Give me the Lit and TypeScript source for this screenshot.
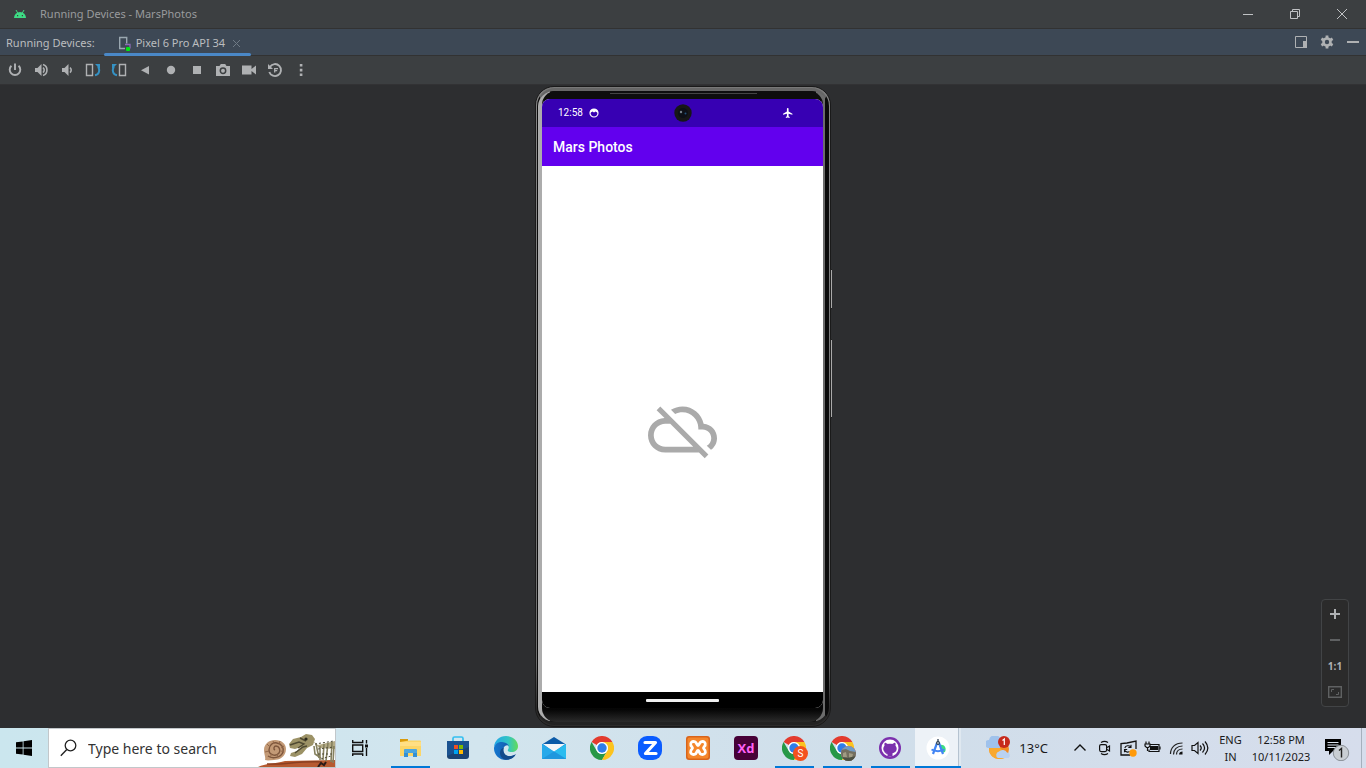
import { LitElement, html, css, svg, TemplateResult } from "lit";
import { customElement } from "lit/decorators.js";
import { classMap } from "lit/directives/class-map.js";

const icon = (w: number, h: number, body: unknown, box = `0 0 ${w} ${h}`) =>
  html`<svg width=${w} height=${h} viewBox=${box} aria-hidden="true">${body}</svg>`;

const chromeParts = svg`
  <path d="M1.6 6A12 12 0 0 1 22.4 6H12a6 6 0 0 0-5.2 3z" fill="#e33b2e"/>
  <path d="M1.6 6A12 12 0 0 0 12 24l5.2-9A6 6 0 0 1 6.8 15z" fill="#279847"/>
  <path d="M22.4 6A12 12 0 0 1 12 24l5.2-9a6 6 0 0 0 0-6L12 6z" fill="#fcc31e"/>
  <circle cx="12" cy="12" r="6" fill="#fff"/><circle cx="12" cy="12" r="4.7" fill="#2f7de9"/>`;

const deviceTools: { name: string; art: TemplateResult }[] = [
  { name: "Power", art: icon(16, 16, svg`<path d="M4.4 3.8a5.3 5.3 0 1 0 7.2 0M8 1.5V8" fill="none" stroke="#afb1b3" stroke-width="1.9"/>`) },
  { name: "Volume up", art: icon(16, 16, svg`<path d="M2 6h2.500l4-4v12l-4-4H2z" fill="#afb1b3"/><path d="M10 5.500a3.200 3.200 0 0 1 0 5M10 2.500a5.800 5.800 0 0 1 0 11" fill="none" stroke="#afb1b3" stroke-width="1.600"/>`) },
  { name: "Volume down", art: icon(16, 16, svg`<path d="M3 6h2.500l4-4v12l-4-4H3z" fill="#afb1b3"/><path d="M11 5.500a3.200 3.200 0 0 1 0 5" fill="none" stroke="#afb1b3" stroke-width="1.600"/>`) },
  { name: "Rotate left", art: icon(16, 16, svg`<path d="M1.500 2.500h6v11h-6z" fill="none" stroke="#afb1b3" stroke-width="1.400"/><path d="M10 13.300c4-.6 5.200-4.500 3.200-9" fill="none" stroke="#3592c4" stroke-width="2"/><path d="M10 2h5v5z" fill="#3592c4"/>`) },
  { name: "Rotate right", art: icon(16, 16, svg`<path d="M8.500 2.500h6v11h-6z" fill="none" stroke="#afb1b3" stroke-width="1.400"/><path d="M6 13.300c-4-.6-5.200-4.500-3.200-9" fill="none" stroke="#3592c4" stroke-width="2"/><path d="M6 2H1v5z" fill="#3592c4"/>`) },
  { name: "Back", art: icon(16, 16, svg`<path d="M12 4v8.500L4 8.250z" fill="#afb1b3"/>`) },
  { name: "Home", art: icon(16, 16, svg`<circle cx="8" cy="8" r="4.200" fill="#afb1b3"/>`) },
  { name: "Overview", art: icon(16, 16, svg`<path d="M4 4h8v8H4z" fill="#afb1b3"/>`) },
  { name: "Take screenshot", art: icon(16, 16, svg`<path d="M1 4h3.500l1.300-2h4.400l1.300 2H15v10H1z" fill="#afb1b3"/><circle cx="8" cy="8.800" r="2.700" fill="none" stroke="#3c3f41" stroke-width="1.500"/>`) },
  { name: "Record screen", art: icon(16, 16, svg`<path d="M1 3.500h9.500V7L15 3.500v9L10.500 9v3.500H1z" fill="#afb1b3"/>`) },
  { name: "Snapshots", art: icon(16, 16, svg`<path d="M3 4.700A6 6 0 1 1 2.300 10" fill="none" stroke="#afb1b3" stroke-width="1.900"/><path d="M1 2v5h5z" fill="#afb1b3"/><path d="M7.700 10.500V6.700H11M7.700 8.700h2.500" fill="none" stroke="#afb1b3" stroke-width="1.300"/>`) },
  { name: "More", art: icon(16, 16, svg`<path d="M6.800 2h2.600v2.600H6.800zM6.800 6.800h2.600v2.600H6.800zM6.800 11.500h2.600v2.600H6.800z" fill="#afb1b3"/>`) },
];

const apps: { name: string; running?: boolean; active?: boolean; art: TemplateResult }[] = [
  { name: "File Explorer", running: true, art: icon(24, 24, svg`<path d="M2 3h8v3H2z" fill="#d99a0b"/><path d="M2 6l9-1.500h11a1 1 0 0 1 1 1V20H2z" fill="#fcd667"/><path d="M2 6h21v4H2z" fill="#ffdf84"/><path d="M6 21v-6.500a1.500 1.500 0 0 1 1.500-1.500h10a1.500 1.500 0 0 1 1.500 1.500V21h-4v-4h-5v4z" fill="#3390d4"/><path d="M6 14.500A1.500 1.500 0 0 1 7.500 13h10a1.500 1.500 0 0 1 1.500 1.500V17H6z" fill="#4ba6df"/>`) },
  { name: "Microsoft Store", art: icon(24, 24, svg`<path d="M7 6V2.500A1.500 1.500 0 0 1 8.500 1h7A1.500 1.500 0 0 1 17 2.500V6" fill="none" stroke="#35bff0" stroke-width="1.700"/><path d="M1 5h22v15a3 3 0 0 1-3 3H4a3 3 0 0 1-3-3z" fill="#1b4372"/><path d="M1 5h22v6L1 20z" fill="#1a5290"/><path d="M8 9h4v4H8z" fill="#f25022"/><path d="M13 9h4v4h-4z" fill="#7fba00"/><path d="M8 14h4v4H8z" fill="#00a4ef"/><path d="M13 14h4v4h-4z" fill="#ffb900"/>`) },
  { name: "Microsoft Edge", art: icon(24, 24, svg`
      <defs><linearGradient id="e1" x1="0" x2="1"><stop offset="0" stop-color="#22a6e8"/><stop offset=".6" stop-color="#32c5c3"/><stop offset="1" stop-color="#63db58"/></linearGradient>
      <linearGradient id="e2" x1="0" x2="1"><stop offset="0" stop-color="#1477cf"/><stop offset="1" stop-color="#154f9f"/></linearGradient></defs>
      <path d="M0 11C.5 4.500 5.500 0 12 0c7 0 12 4.800 12 10 0 4-3 6-6.300 6-2.500 0-4-.8-4-1.800 0-.8 1-1 1-2.700C14.700 9 12 7 8.500 7 4 7 1 9 0 11z" fill="url(#e1)"/>
      <path d="M0 12c.5-3.500 4-6.300 8-6 3.500.2 6 1.700 7 4-1-1-2.500-1-3.500-.3C8 11.500 8 19 14 20c3 .5 5.500-.3 7.800-1.700C20 21.800 16.500 24 12 24 5 24-.2 18.500 0 12z" fill="url(#e2)"/>
      <path d="M9.800 11.500C8.500 16 11 20 15 20.200c2.600 0 5-.8 6.800-2-3 5-8.300 6.300-12.300 4.800C5 20.500 4.500 13.500 9.800 11.500z" fill="#114a8b"/>`) },
  { name: "Mail", art: icon(24, 24, svg`<path d="M0 8.500L12 1l12 7.500z" fill="#0c5ba8"/><path d="M0 8h24v15H0z" fill="#1590dc"/><path d="M1 8h22L12 16z" fill="#f5f7f9"/><path d="M0 8l24 15H0z" fill="#26a9ea"/><path d="M24 8v15L12 15.500z" fill="#2bbcef"/><path d="M0 23l12-7.500L24 23z" fill="#1f97de"/>`) },
  { name: "Chrome", art: icon(24, 24, chromeParts) },
  { name: "Zoom", art: icon(24, 24, svg`<rect width="24" height="24" rx="9" fill="#0b5cff"/><path d="M7 6.500h10.500L7.500 17.500H18" fill="none" stroke="#fff" stroke-width="3.200" stroke-linejoin="round" stroke-linecap="round"/>`) },
  { name: "XAMPP", art: icon(24, 24, svg`<rect width="24" height="24" rx="3" fill="#d9641a"/><rect x="1.500" y="1.500" width="21" height="21" rx="2" fill="#f5872c"/><path d="M9 5.800C6 4.800 4 7 4.800 9.200c.4 1.200 1.700 1.800 1.700 2.800s-1.300 1.600-1.700 2.800C4 17 6 19.200 9 18.200c1.700-.6 1.700-3.700 3-3.700s1.300 3.100 3 3.700c3 1 5-1.200 4.200-3.400-.4-1.200-1.700-1.800-1.700-2.800s1.300-1.600 1.700-2.800C20 7 18 4.800 15 5.800c-1.700.6-1.700 3.700-3 3.700S10.700 6.400 9 5.800z" fill="none" stroke="#fff" stroke-width="2.800"/>`) },
  { name: "Adobe XD", art: html`<span class="xd">Xd</span>` },
  { name: "Chrome profile S", running: true, art: html`<span class="profile">${icon(24, 24, chromeParts)}<span class="badge">S</span></span>` },
  { name: "Chrome profile photo", running: true, art: html`<span class="profile">${icon(24, 24, chromeParts)}<span class="badge">${icon(15, 15, svg`<path d="M0 0h15v15H0z" fill="#6f9bc6"/><path d="M0 4l5-1 4 2 6 1v9H0z" fill="#746f5f"/><path d="M2 7l3-1 1 5H2zM8 7l4 1-1 4-3 1z" fill="#a19b83"/><path d="M0 11l6 1 9-2v5H0z" fill="#4c5042"/>`)}</span></span>` },
  { name: "GitHub Desktop", running: true, art: icon(24, 24, svg`<circle cx="12" cy="12" r="11" fill="#7b30ad"/><circle cx="12" cy="12" r="8.500" fill="#fff"/><path d="M9.500 20.500v-3.300c-4.500-.7-5.200-5.200-3-7.500-.3-1-.2-2 .2-3 1.200 0 2.100.6 3 1.300 1.500-.4 3-.4 4.600 0 .9-.7 1.800-1.300 3-1.300.4 1 .5 2 .2 3 2.200 2.300 1.500 6.800-3 7.500v3.300z" fill="#7b30ad"/><path d="M10 17.600c-1.500.4-2.300-.2-3-1.500" stroke="#7b30ad" fill="none"/>`) },
  { name: "Android Studio", running: true, active: true, art: icon(24, 24, svg`<circle cx="12" cy="12" r="11.500" fill="#fff"/><path d="M14 9c4-1 7 3 5 7l-3 1z" fill="#3ddc84"/><path d="M11 7L7 18M13 7l4 11" stroke="#4285f4" stroke-width="2.200" fill="none"/><path d="M5.500 13.500c3.500 2.200 9.500 2.200 13 0" stroke="#4285f4" stroke-width="2" fill="none"/><circle cx="12" cy="7" r="2" fill="#2d4053"/><circle cx="12" cy="7" r=".8" fill="#fff"/><path d="M12 3v3" stroke="#2d4053" stroke-width="1.300"/>`) },
];

const tray: { name: string; art: TemplateResult }[] = [
  { name: "Show hidden icons", art: icon(16, 16, svg`<path d="M2.500 10.500L8 5l5.500 5.500" fill="none" stroke="#111" stroke-width="1.400"/>`) },
  { name: "Meet now", art: icon(16, 16, svg`<rect x="3.600" y="4.600" width="7" height="7" rx="1.500" fill="none" stroke="#111" stroke-width="1.200"/><path d="M11 7.500l2.500-1.500v5L11 9.500M5 2.500c2-1.300 5-1.300 7 0M5 13.500c2 1.300 5 1.300 7 0" fill="none" stroke="#111" stroke-width="1.200"/>`) },
  { name: "Update", art: icon(17, 17, svg`<path d="M10 15H1V3.500L7 3l9-2v8" fill="none" stroke="#111" stroke-width="1.300"/><path d="M4.800 8c1-2.500 4-3 6-1M11 4.800V7.500H8.300M4.500 12.200V9.500h2.700M4.500 10c1 2 3 2.500 5 1.500" fill="none" stroke="#111" stroke-width="1.100"/><circle cx="13" cy="13" r="3.700" fill="#ff9a0a"/>`) },
  { name: "Battery", art: icon(17, 16, svg`<path d="M6 4.500h9v7H5v-2" fill="none" stroke="#111" stroke-width="1.200"/><path d="M6 6h8v4H6z" fill="#111"/><path d="M16 6.500v3M2 1.500V4M5 1.500V4M1 4h5v2L4.500 7.500H2.500L1 6zM3.500 7v4" fill="none" stroke="#111" stroke-width="1.200"/>`) },
  { name: "Wi-Fi", art: icon(16, 16, svg`<path d="M2.500 14C2.500 7.500 7 3 14.500 3M5.500 14.500C5.500 9.500 9 6 14.500 6M8.500 14.500c0-3.200 2.500-5.500 6-5.500" fill="none" stroke="#222" stroke-width="1.200"/><path d="M11 14.500c0-2 1.500-3 3.500-3v3z" fill="#111"/>`) },
  { name: "Volume", art: icon(18, 16, svg`<path d="M1 5.500h2.500L7 2.500v11l-3.500-3H1zM9 5.500c1.500 1.500 1.500 3.500 0 5M11.500 3.500c2.500 2.700 2.500 6.300 0 9M14 1.500c3.500 4 3.500 9 0 13" fill="none" stroke="#111" stroke-width="1.200"/>`) },
];

@customElement("ide-header")
class IdeHeader extends LitElement {
  static styles = css`
    :host { display: block; color: #bbbdbf; font: 11px/16px "Noto Sans", "Open Sans", sans-serif; }
    button { border: 0; padding: 0; margin: 0; background: none; color: inherit; font: inherit; display: flex; align-items: center; justify-content: center; }
    svg { display: block; flex: none; }
    .title { display: flex; align-items: center; height: 28px; padding-right: 1px; background: #3c3f41; border-bottom: 1px solid #323232; color: #999b9d; }
    .logo { width: 40px; display: flex; justify-content: center; }
    .grow { flex: 1; }
    .win { width: 47px; height: 28px; }
    .tabs { display: flex; align-items: stretch; height: 26px; background: #3d4855; border-bottom: 1px solid #323232; }
    .label { padding: 6px 9px 4px 6px; }
    .tab { position: relative; padding: 2px 7px 0 13px; gap: 4px; }
    .tab::after { content: ""; position: absolute; left: 0; right: 0; bottom: -1px; height: 3px; border-radius: 2px; background: #4a88c7; }
    .act { width: 26px; }
    .tools { display: flex; align-items: center; height: 28px; padding-left: 2px; background: #3c3f41; }
    .tool { width: 26px; height: 26px; }
  `;
  render() {
    return html`
      <div class="title">
        <span class="logo">${icon(12, 8, svg`<path d="M0 8a6 6 0 0 1 12 0z" fill="#3ddc84"/><path d="M2 0l1.700 3M10 0L8.300 3" stroke="#3ddc84" stroke-width="1"/><path d="M3 5h1.200v1.200H3zM7.800 5H9v1.200H7.800z" fill="#3c3f41"/>`)}</span>
        <span>Running Devices - MarsPhotos</span>
        <span class="grow"></span>
        <button class="win" aria-label="Minimize">${icon(12, 12, svg`<path d="M1 6.500h10" stroke="#c0c2c4"/>`)}</button>
        <button class="win" aria-label="Restore">${icon(12, 12, svg`<path d="M1.500 3.500h7v7h-7zM3.500 3.500v-2h7v7h-2" fill="none" stroke="#c0c2c4"/>`)}</button>
        <button class="win" aria-label="Close">${icon(12, 12, svg`<path d="M1 1l10 10M11 1L1 11" stroke="#c0c2c4"/>`)}</button>
      </div>
      <div class="tabs">
        <span class="label">Running Devices:</span>
        <button class="tab">
          ${icon(15, 15, svg`<path d="M8 12.500H2.700v-11h7v6" fill="none" stroke="#9aa7b0" stroke-width="1.400"/><path d="M8 8.500h5v4" fill="none" stroke="#8b6bb5" stroke-width="1.300"/><rect x="9" y="11" width="4" height="4" rx="1" fill="#00e612"/>`)}
          <span>Pixel 6 Pro API 34</span>
          ${icon(15, 15, svg`<path d="M4 4l7 7M11 4l-7 7" stroke="#6f7a85"/>`)}
        </button>
        <span class="grow"></span>
        <button class="act" aria-label="Window mode">${icon(14, 14, svg`<path d="M1.500 1.500h11v11h-11z" fill="none" stroke="#afb1b3"/><path d="M9 6h4v7H9z" fill="#afb1b3"/>`)}</button>
        <button class="act" aria-label="Settings">${icon(14, 14, svg`<circle cx="7" cy="7" r="3.500" fill="none" stroke="#afb1b3" stroke-width="2.600"/><path d="M7 .5v3M7 10.500v3M1.400 3.800L4 5.300M10 8.700l2.600 1.500M1.400 10.200L4 8.700M10 5.300l2.600-1.500" stroke="#afb1b3" stroke-width="2.800"/>`)}</button>
        <button class="act" aria-label="Hide">${icon(14, 14, svg`<path d="M1 6h12v2H1z" fill="#afb1b3"/>`)}</button>
      </div>
      <div class="tools">${deviceTools.map((t) => html`<button class="tool" aria-label=${t.name}>${t.art}</button>`)}</div>
    `;
  }
}

@customElement("phone-device")
class PhoneDevice extends LitElement {
  static styles = css`
    :host { display: block; }
    svg { display: block; }
    .shell { position: relative; box-sizing: border-box; height: 100%; display: flex; border: 1px solid #1a1a1a; border-radius: 19px; padding: 1px; background: linear-gradient(#777, #858585 2%, #707070 90%, #2c2b2b 97%); }
    .rim { flex: 1; display: flex; border: 1px solid #0b0b0b; border-top: 3px solid #666; border-bottom: 3px solid #222; border-radius: 18px; padding: 0 5px 0 4px; background: linear-gradient(90deg, #acacac 12px, #0a0a0a 12px, #0a0a0a calc(100% - 12px), #6c6c6c calc(100% - 12px), #6c6c6c calc(100% - 3px), #0a0a0a calc(100% - 3px)); }
    .glass { flex: 1; display: flex; padding: 8px 0 14px; border-radius: 14px; background: linear-gradient(#0d0d0d 0 96%, #050505 98%, #2b2b2b); }
    .screen { flex: 1; display: flex; flex-direction: column; overflow: hidden; border-radius: 8px; background: #fff; font-family: Roboto, sans-serif; color: #fff; }
    .status { display: grid; grid-template-columns: 1fr auto 1fr; align-items: center; height: 28px; padding: 0 16px; background: #3700b3; font-size: 10px; line-height: 12px; }
    .left { display: flex; gap: 6px; align-items: center; }
    .right { display: flex; justify-content: flex-end; padding-right: 13px; }
    .bar { display: flex; align-items: center; height: 39px; padding-left: 11px; background: #6200ee; }
    h1 { margin: 0; font-size: 14px; line-height: 18px; font-weight: 500; }
    .content { flex: 1; display: grid; place-items: center; }
    .nav { height: 16px; background: #000; display: flex; justify-content: center; align-items: center; }
    .pill { width: 73px; height: 3px; border-radius: 1px; background: #f0f0f0; }
    .slit { position: absolute; top: 6px; left: 25%; right: 25%; height: 1px; background: #444; }
    .key { position: absolute; right: -2px; width: 1px; background: #aaa; border: solid #222; border-width: 1px 0 1px 1px; }
    .power { top: 28.5%; height: 6%; }
    .volume { top: 39.5%; height: 12%; }
  `;
  render() {
    return html`
      <div class="shell">
        <div class="rim"><div class="glass"><div class="screen">
          <div class="status">
            <span class="left"><span>12:58</span>${icon(10, 10, svg`<circle cx="5" cy="5" r="4" fill="none" stroke="#fff" stroke-width="1.200"/><path d="M1 5V3l2.500-2h3L9 3v2L6.500 3.500 5 4.500 3.500 3.500z" fill="#fff"/>`)}</span>
            ${icon(18, 18, svg`<circle cx="9" cy="9" r="8.700" fill="#171717"/><circle cx="9" cy="9" r="5" fill="#0d1017"/><circle cx="7" cy="8" r="1.200" fill="#75808b"/><circle cx="11.500" cy="9.500" r="1" fill="#235179"/>`)}
            <span class="right">${icon(12, 12, svg`<path d="M10.500 8V7L6.800 4.800V2.200a.8.8 0 0 0-1.600 0v2.600L1.500 7v1l3.700-1.100v2.500l-1 .8v.8L6 10.500l1.800.5v-.8l-1-.8V6.900z" fill="#fff"/>`, "0.5 0.5 11.5 11.5")}</span>
          </div>
          <div class="bar"><h1>Mars Photos</h1></div>
          <div class="content">${icon(69, 69, svg`<path d="M19.350 10.040C18.670 6.590 15.640 4 12 4c-1.480 0-2.850.43-4.010 1.170l1.460 1.460C10.210 6.230 11.080 6 12 6c3.040 0 5.500 2.460 5.500 5.500v.5H19c1.660 0 3 1.340 3 3 0 1.130-.64 2.110-1.560 2.620l1.450 1.450C23.160 18.160 24 16.680 24 15c0-2.640-2.050-4.780-4.650-4.960zM3 5.270l2.750 2.740C2.560 8.150 0 10.770 0 14c0 3.310 2.690 6 6 6h11.730l2 2L21 20.730 4.270 4zM7.730 10l8 8H6c-2.210 0-4-1.790-4-4s1.790-4 4-4z" fill="#aaa"/>`, "0 0 24 24")}</div>
          <div class="nav"><span class="pill"></span></div>
        </div></div></div>
        <span class="slit"></span><span class="key power"></span><span class="key volume"></span>
      </div>`;
  }
}

@customElement("zoom-controls")
class ZoomControls extends LitElement {
  static styles = css`
    :host { display: flex; flex-direction: column; width: 26px; padding: 1px 0; border: 1px solid #424446; border-radius: 4px; background: #2b2b2b; }
    button { height: 26px; padding: 0; border: 0; background: none; display: grid; place-items: center; color: #afb1b3; }
    .ratio { font: 700 10px/12px "Open Sans", sans-serif; }
  `;
  render() {
    return html`
      <button aria-label="Zoom in">${icon(12, 12, svg`<path d="M5 1h2v4h4v2H7v4H5V7H1V5h4z" fill="#afb1b3"/>`)}</button>
      <button aria-label="Zoom out">${icon(12, 12, svg`<path d="M1 5h10v2H1z" fill="#5f6162"/>`)}</button>
      <button class="ratio">1:1</button>
      <button aria-label="Zoom to fit">${icon(14, 12, svg`<path d="M.7.7h12.600v10.600H.7z" fill="none" stroke="#5f6162" stroke-width="1.400"/><path d="M3.500 6V3.500H6M8 8.500h2.500V6" fill="none" stroke="#5f6162"/>`)}</button>`;
  }
}

@customElement("task-bar")
class TaskBar extends LitElement {
  static styles = css`
    :host { display: flex; align-items: stretch; height: 40px; background: linear-gradient(90deg, #cbe6ee, #d2e5ee 35%, #d0deea 65%, #d6ddec); color: #1a1a1a; font: 11px/17px "Noto Sans", "Open Sans", sans-serif; }
    button { border: 0; padding: 0; margin: 0; background: none; color: inherit; font: inherit; display: flex; align-items: center; justify-content: center; }
    svg { display: block; flex: none; }
    .start { width: 48px; }
    .search { box-sizing: border-box; width: 288px; display: flex; align-items: center; background: #fff; border: 1px solid #c2c7ca; padding-left: 11px; gap: 10px; }
    .search input { flex: 1; min-width: 0; padding: 1px 0 0; border: 0; outline: 0; background: none; font: 14px/20px "Noto Sans", "Open Sans", sans-serif; color: #333; }
    .search input::placeholder { color: #333; opacity: 1; }
    .art { align-self: flex-end; }
    .view { width: 48px; }
    .apps { display: flex; padding-left: 2px; }
    .app { position: relative; width: 48px; flex: none; }
    .running::after { content: ""; position: absolute; left: 5px; right: 4px; bottom: 0; height: 2px; background: #0078d7; }
    .active { background: linear-gradient(90deg, transparent 1px, #edf2f7 1px, #edf2f7 44px, #b5c3d0 44px, #b5c3d0 45px, #dfe8f0 45px, #dfe8f0 47px, transparent 47px); }
    .active::after { left: 1px; right: 1px; }
    .xd { width: 24px; height: 24px; border-radius: 4px; background: #470137; color: #ff61f6; font: 700 13px/24px "Open Sans", sans-serif; text-align: center; }
    .profile { position: relative; }
    .badge { position: absolute; left: 11px; top: 10px; width: 15px; height: 15px; border-radius: 50%; overflow: hidden; background: #f4511e; color: #fff; font: 10px/15px Roboto, sans-serif; text-align: center; }
    .grow { flex: 1; }
    .weather { gap: 8px; font-size: 13px; margin-right: 20px; }
    .tray { width: 24px; }
    .lang { width: 37px; display: block; text-align: center; }
    .clock { width: 64px; white-space: nowrap; display: flex; flex-direction: column; align-items: center; }
    .notes { width: 48px; }
    .edge { width: 4px; border-left: 1px solid #a5b0bd; }
  `;
  render() {
    return html`
      <button class="start" aria-label="Start">${icon(16, 16, svg`<path d="M0 2.300L6.700 1.400v6.200H0zM7.500 1.300L16 0v7.600H7.500zM0 8.400h6.700v6.200L0 13.700zM7.500 8.400H16V16l-8.500-1.300z" fill="#000"/>`)}</button>
      <div class="search">
        <label for="q" aria-label="Search">${icon(18, 18, svg`<circle cx="10.500" cy="6.500" r="5.300" fill="none" stroke="#222" stroke-width="1.300"/><path d="M6.800 10.500L.8 16.800" stroke="#222" stroke-width="1.400"/>`)}</label>
        <input id="q" type="text" aria-label="Search" placeholder="Type here to search" />
        <span class="art">${icon(77, 36, svg`
          <path d="M0 36c9-4 18-3 27-6l50-1v7z" fill="#b65a30"/><path d="M9 33c15 1 30-3 55-2" stroke="#8b3f20" stroke-width="1.500" fill="none"/><path d="M60 36l3-4 3 2 2-3" stroke="#2b1b18" fill="none" stroke-width="2"/>
          <path d="M6 19c0-6 5-10 11-10 7 0 11 4 11 9 0 8-7 11-12 11-3 0-6 1-9 0 1-2-1-6-1-10z" fill="#c39a76"/>
          <path d="M17 19c-2-1-1-4 1-4 3 0 5 4 3 7-3 4-10 2-10-3 0-5 4-8 8-7 5 1 7 5 6 9-2 6-11 7-15 4" stroke="#7d563c" stroke-width="1.400" fill="none"/>
          <path d="M9 13l3 3M15 10l1 3M22 10l-1 3M26 15l-3 2M26 21l-3-1M20 26l-1-3M12 26l2-3M7 21l4-1" stroke="#94694a"/>
          <path d="M31 13l4-5 8-2 5-3 6 1 3 4-2 6-6 3-5 6-7 3-5-1 1-3 6-2 4-4-6 2-5-1z" fill="#9c9266"/><path d="M32 14l9-3 5 2-6 4M37 22l8-6 4-1M42 7l6 3" fill="none" stroke="#4f4a32" stroke-width="1.400"/><circle cx="48" cy="8" r="1.600" fill="#2a281b"/>
          <path d="M54 9l6 5 17-4v8l-16-1z" fill="#b3aa85"/>
          <path d="M58 13l3 14M62 15v14M66 13l-1 16M70 12l-2 18M74 11l-1 20M76 15l-1 17M56 15l1 8 6 4" stroke="#85805e" stroke-width="1.600" fill="none"/>
          <path d="M57 13l19-3M60 18l16-2M60 23h15M63 28l10-3" stroke="#4f4b37" stroke-dasharray="2 2" fill="none"/>`)}</span>
      </div>
      <button class="view" aria-label="Task view">${icon(18, 18, svg`<path d="M1.700 6h10v6.500h-10zM1.700 1v2.500h10V1M1.700 17v-2h10v2M15.500 1v3.500M15.500 9v8" fill="none" stroke="#111" stroke-width="1.400"/><path d="M14 5.500h3v3h-3z" fill="#111"/>`)}</button>
      <div class="apps">${apps.map((a) => html`<button class=${classMap({ app: true, running: !!a.running, active: !!a.active })} aria-label=${a.name}>${a.art}</button>`)}</div>
      <span class="grow"></span>
      <button class="weather">
        ${icon(25, 24, svg`<circle cx="13" cy="13" r="10" fill="#f38b24"/><path d="M3 13A10 10 0 0 0 14 23c4 0 7-2 8-4L8 7z" fill="#f9a92f"/><path d="M3 12a4 4 0 0 1 0-8 6 6 0 0 1 11-2v10z" fill="#9fc2ec"/><path d="M12 22a3.500 3.500 0 0 1 1-6.500 5 5 0 0 1 8 1 3 3 0 0 1 1.500 5.500z" fill="#b9d2f1"/><circle cx="18" cy="6" r="6" fill="#c72a1c"/><path d="M16.500 4.500L18.300 3v6" fill="none" stroke="#fff" stroke-width="1.200"/>`)}
        <span>13°C</span>
      </button>
      ${tray.map((t) => html`<button class="tray" aria-label=${t.name}>${t.art}</button>`)}
      <button class="lang">ENG<br />IN</button>
      <button class="clock"><span>12:58 PM</span><span>10/11/2023</span></button>
      <button class="notes" aria-label="Notifications, 1 new">${icon(26, 26, svg`<path d="M1 4h16v12H9l-4 4v-4H1z" fill="#000"/><path d="M3.500 7.500h11M3.500 10h11M3.500 12.500h11" stroke="#dbe3ef"/><circle cx="17" cy="18" r="7.700" fill="#c9ced4" stroke="#8a9097"/><path d="M15 15.500l2.500-2v9" fill="none" stroke="#222" stroke-width="1.400"/>`)}</button>
      <span class="edge"></span>`;
  }
}

@customElement("app-root")
class AppRoot extends LitElement {
  static styles = css`
    :host { display: flex; flex-direction: column; height: 100vh; overflow: hidden; background: #2d2e30; }
    main { position: relative; flex: 1; min-height: 0; box-sizing: border-box; display: flex; justify-content: center; padding: 1px 0; border-top: 1px solid #323234; }
    phone-device { height: 100%; aspect-ratio: 296 / 641; }
    zoom-controls { position: absolute; right: 17px; bottom: 21px; }
  `;
  render() {
    return html`<ide-header></ide-header><main><phone-device></phone-device><zoom-controls></zoom-controls></main><task-bar></task-bar>`;
  }
}
